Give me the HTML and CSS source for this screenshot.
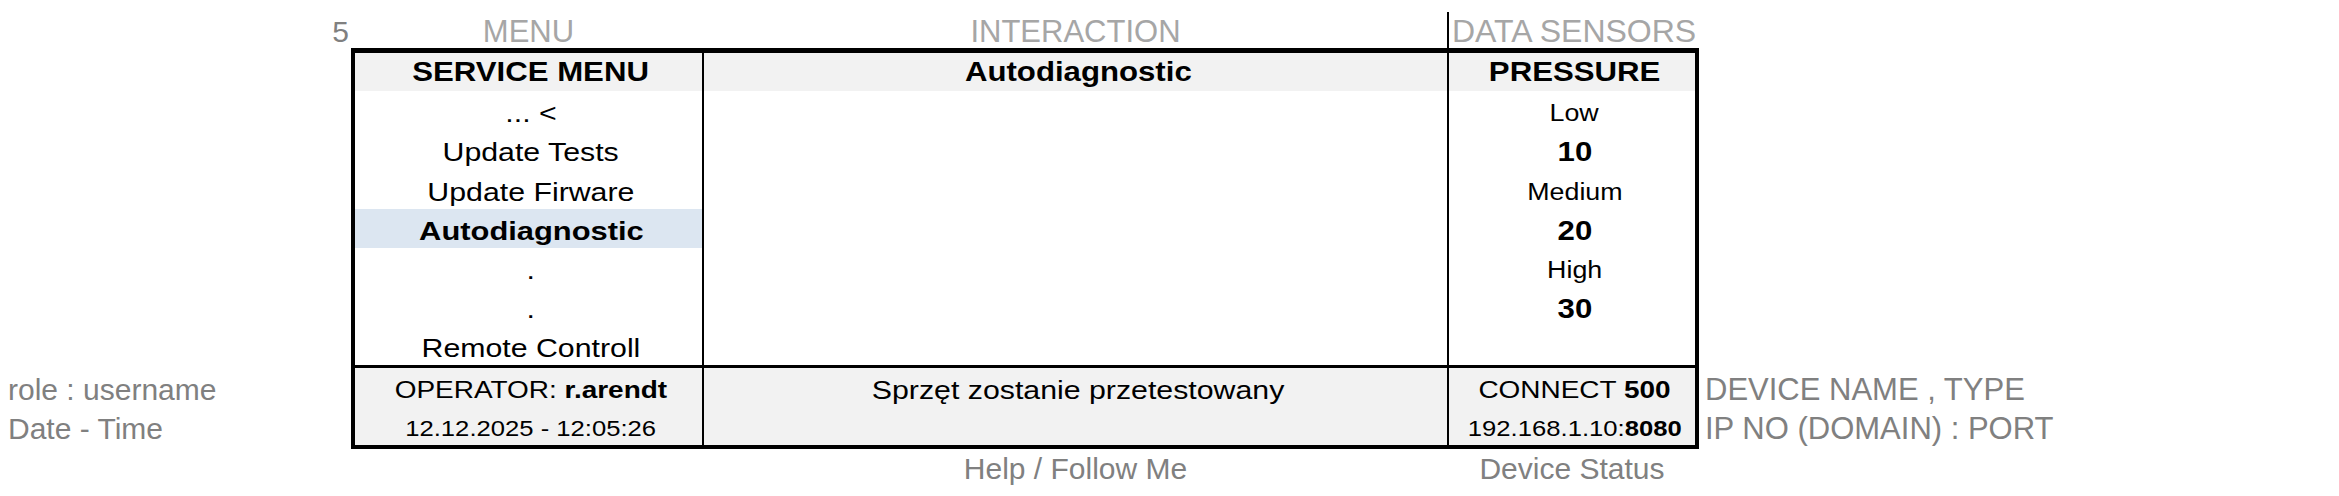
FILE: index.html
```html
<!DOCTYPE html>
<html lang="pl">
<head>
<meta charset="utf-8">
<title>Service Menu</title>
<link rel="stylesheet" href="styles.css">
</head>
<body>
<div class="page">
  <div class="corner-num">5</div>
  <div class="label-row top">
    <div class="lab w1 light caps">MENU</div>
    <div class="lab w2 light caps">INTERACTION</div>
    <div class="lab w3 light marked">DATA SENSORS</div>
  </div>
  <div class="blank-area"></div>

  <div class="side left">
    <div class="side-row">role : username</div>
    <div class="side-row tall">Date - Time</div>
  </div>

  <div class="sheet">
    <div class="col w1">
      <div class="cell head"><span class="sx bold">SERVICE MENU</span></div>
      <div class="cell"><span class="sx">... &lt;</span></div>
      <div class="cell"><span class="sx">Update Tests</span></div>
      <div class="cell r40"><span class="sx">Update Firware</span></div>
      <div class="cell selected"><span class="sx bold sel">Autodiagnostic</span></div>
      <div class="cell"><span class="sx">.</span></div>
      <div class="cell"><span class="sx">.</span></div>
      <div class="cell"><span class="sx">Remote Controll</span></div>
      <div class="foot">
        <div class="cell"><span class="sx med">OPERATOR: <b>r.arendt</b></span></div>
        <div class="cell tall"><span class="sx small">12.12.2025 - 12:05:26</span></div>
      </div>
    </div>
    <div class="col w2 ruled">
      <div class="cell head"><span class="sx bold">Autodiagnostic</span></div>
      <div class="cell body-merged"></div>
      <div class="foot">
        <div class="cell"><span class="sx">Sprzęt zostanie przetestowany</span></div>
        <div class="cell tall"></div>
      </div>
    </div>
    <div class="col w3 ruled">
      <div class="cell head"><span class="sx bold">PRESSURE</span></div>
      <div class="cell"><span class="sx level">Low</span></div>
      <div class="cell"><span class="sx bold">10</span></div>
      <div class="cell r40"><span class="sx level">Medium</span></div>
      <div class="cell"><span class="sx bold">20</span></div>
      <div class="cell"><span class="sx level">High</span></div>
      <div class="cell"><span class="sx bold">30</span></div>
      <div class="cell"></div>
      <div class="foot">
        <div class="cell"><span class="sx med">CONNECT <b>500</b></span></div>
        <div class="cell tall"><span class="sx small">192.168.1.10:<b>8080</b></span></div>
      </div>
    </div>
  </div>

  <div class="side right">
    <div class="side-row caps">DEVICE NAME , TYPE</div>
    <div class="side-row tall caps">IP NO (DOMAIN) : PORT</div>
  </div>

  <div class="blank-area"></div>
  <div class="label-row bottom">
    <div class="lab w1"></div>
    <div class="lab w2">Help / Follow Me</div>
    <div class="lab w3 centered">Device Status</div>
  </div>
  <div class="blank-area"></div>
</div>
</body>
</html>
```

FILE: styles.css
```css
* { box-sizing: border-box; }

html, body {
  margin: 0;
  padding: 0;
  background: #ffffff;
}

body {
  font-family: "Liberation Sans", Arial, sans-serif;
  color: #000000;
}

.page {
  display: grid;
  grid-template-columns: 351px 1348px 1fr;
  grid-template-rows: 48px 401px 47px;
  width: 2339px;
  height: 496px;
}

/* ---------- outside labels ---------- */
.corner-num {
  font-size: 30px;
  line-height: 34px;
  padding-top: 15px;
  padding-right: 2px;
  text-align: right;
  color: #808080;
}

.label-row {
  display: flex;
  padding-left: 4px;
  font-size: 30px;
  line-height: 34px;
  color: #808080;
  white-space: nowrap;
}

.label-row.top .lab { padding-top: 15px; }
.label-row.bottom .lab { padding-top: 3px; }

.lab { text-align: center; }
.lab.light { color: #a6a6a6; }
.lab.w1 { width: 347px; }
.lab.w2 { width: 743px; margin-left: 2px; }
.lab.w3 { width: 248px; }
.lab.centered { padding-left: 2px; }

.caps { font-size: 31px; }

.label-row.top .lab.marked {
  margin-top: 12px;
  padding-top: 3px;
  padding-left: 3px;
  border-left: 2px solid #000;
  text-align: left;
  font-size: 32px;
  line-height: 33px;
}

.side {
  display: flex;
  flex-direction: column;
  justify-content: flex-end;
  padding-bottom: 4px;
  font-size: 30px;
  color: #808080;
  white-space: nowrap;
}

.side.left { padding-left: 8px; }
.side.right { padding-left: 6px; }

.side-row {
  height: 38px;
  padding-top: 6px;
  display: flex;
  align-items: center;
}

.side-row.tall { height: 39px; }

/* ---------- the sheet ---------- */
.sheet {
  display: flex;
  border: 4px solid #000;
  border-top-width: 5px;
}

.col {
  display: flex;
  flex-direction: column;
}

.col.w1 { width: 347px; }
.col.w2 { width: 745px; }
.col.w3 { width: 248px; }
.col.ruled { border-left: 2px solid #000; }

.cell {
  height: 39px;
  padding-top: 6px;
  padding-left: 5px;
  display: flex;
  align-items: center;
  justify-content: center;
  white-space: nowrap;
}

.cell.r40 { height: 40px; }
.cell.head { height: 38px; padding-top: 0; background: #f2f2f2; }
.cell.selected { background: #dce6f1; }
.cell.body-merged { height: 274px; }

.foot {
  border-top: 3px solid #000;
  background: #f2f2f2;
}

.foot .cell { height: 38px; }
.foot .cell.tall { height: 39px; }

/* spreadsheet text is drawn slightly wide */
.sx {
  display: inline-block;
  font-size: 26px;
  transform: scaleX(1.165);
  transform-origin: center;
}

.sx.bold { font-weight: bold; font-size: 26.75px; }
.sx.bold.sel { font-size: 26.5px; }
.sx.med { font-size: 24px; }
.sx.level { font-size: 23px; }
.sx.small { font-size: 22px; }
.sx b { font-weight: bold; }
```
